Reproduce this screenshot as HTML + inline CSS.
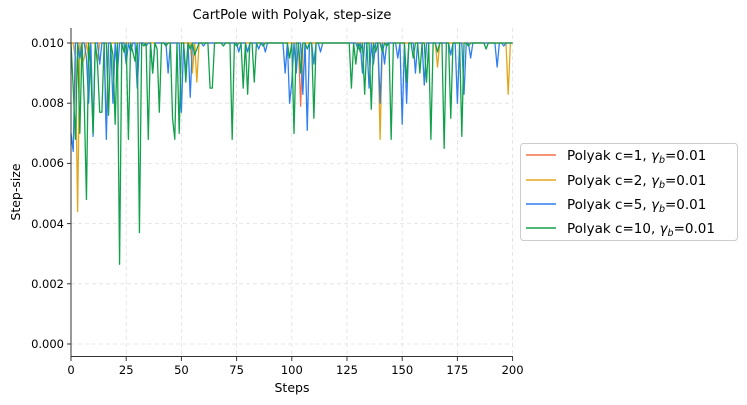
<!DOCTYPE html>
<html><head><meta charset="utf-8"><style>
body{margin:0;background:#fff;}
svg{display:block;font-family:"DejaVu Sans","Liberation Sans",sans-serif;}
</style></head><body>
<svg width="747" height="405" viewBox="0 0 747 405" xmlns="http://www.w3.org/2000/svg">
<rect width="747" height="405" fill="#fff"/>
<text x="292" y="19" font-size="13" text-anchor="middle" fill="#000">CartPole with Polyak, step-size</text>
<g stroke="#e0e0e0" stroke-width="0.8" stroke-dasharray="4,3">
<line x1="71" y1="28" x2="71" y2="356"/><line x1="126.2" y1="28" x2="126.2" y2="356"/><line x1="181.4" y1="28" x2="181.4" y2="356"/><line x1="236.6" y1="28" x2="236.6" y2="356"/><line x1="291.8" y1="28" x2="291.8" y2="356"/><line x1="347" y1="28" x2="347" y2="356"/><line x1="402.2" y1="28" x2="402.2" y2="356"/><line x1="457.4" y1="28" x2="457.4" y2="356"/><line x1="512.6" y1="28" x2="512.6" y2="356"/>
<line x1="71" y1="344" x2="513" y2="344"/><line x1="71" y1="283.8" x2="513" y2="283.8"/><line x1="71" y1="223.6" x2="513" y2="223.6"/><line x1="71" y1="163.4" x2="513" y2="163.4"/><line x1="71" y1="103.2" x2="513" y2="103.2"/><line x1="71" y1="43" x2="513" y2="43"/>
</g>
<g transform="translate(71,344) scale(2.208,-30.1)" fill="none" stroke-width="1.3" stroke-linejoin="round">
<polyline id="pr" vector-effect="non-scaling-stroke" stroke="#f4724f" points="0,10 103,10 104,7.9 105,10 200,10"/>
<polyline id="po" vector-effect="non-scaling-stroke" stroke="#e3a51a" points="0,10 200,10"/>
<polyline id="pb" vector-effect="non-scaling-stroke" stroke="#2f7ff0" points="0,10 200,10"/>
<polyline id="pg" vector-effect="non-scaling-stroke" stroke="#12a14b" points="0,10 200,10"/>
</g>
<g stroke="#333" stroke-width="1">
<line x1="71" y1="28" x2="71" y2="357"/><line x1="70.5" y1="356.5" x2="513" y2="356.5"/>
<line x1="67" y1="344" x2="71" y2="344"/><line x1="67" y1="283.8" x2="71" y2="283.8"/><line x1="67" y1="223.6" x2="71" y2="223.6"/><line x1="67" y1="163.4" x2="71" y2="163.4"/><line x1="67" y1="103.2" x2="71" y2="103.2"/><line x1="67" y1="43" x2="71" y2="43"/>
<line x1="71" y1="357" x2="71" y2="361"/><line x1="126.2" y1="357" x2="126.2" y2="361"/><line x1="181.4" y1="357" x2="181.4" y2="361"/><line x1="236.6" y1="357" x2="236.6" y2="361"/><line x1="291.8" y1="357" x2="291.8" y2="361"/><line x1="347" y1="357" x2="347" y2="361"/><line x1="402.2" y1="357" x2="402.2" y2="361"/><line x1="457.4" y1="357" x2="457.4" y2="361"/><line x1="512.6" y1="357" x2="512.6" y2="361"/>
</g>
<g font-size="11.5" fill="#000" text-anchor="end">
<text x="64" y="348">0.000</text><text x="64" y="288">0.002</text><text x="64" y="228">0.004</text><text x="64" y="167">0.006</text><text x="64" y="107">0.008</text><text x="64" y="47">0.010</text>
</g>
<g font-size="11.5" fill="#000" text-anchor="middle">
<text x="71" y="374">0</text><text x="126.2" y="374">25</text><text x="181.4" y="374">50</text><text x="236.6" y="374">75</text><text x="291.8" y="374">100</text><text x="347" y="374">125</text><text x="402.2" y="374">150</text><text x="457.4" y="374">175</text><text x="512.6" y="374">200</text>
</g>
<text x="292" y="392" font-size="12.5" text-anchor="middle">Steps</text>
<text transform="translate(20,192) rotate(-90)" font-size="12.5" text-anchor="middle">Step-size</text>
<rect x="520.5" y="143.5" width="217" height="97" rx="3" fill="#fff" stroke="#ccc"/>
<g stroke-width="1.5">
<line x1="526" y1="155" x2="556" y2="155" stroke="#f4724f"/>
<line x1="526" y1="180" x2="556" y2="180" stroke="#e3a51a"/>
<line x1="526" y1="204" x2="556" y2="204" stroke="#2f7ff0"/>
<line x1="526" y1="228" x2="556" y2="228" stroke="#12a14b"/>
</g>
<g font-size="13.5" fill="#000">
<text x="567" y="160">Polyak c=1, <tspan font-style="italic">γ</tspan><tspan font-size="9.5" font-style="italic" dy="3">b</tspan><tspan dy="-3">=0.01</tspan></text>
<text x="567" y="185">Polyak c=2, <tspan font-style="italic">γ</tspan><tspan font-size="9.5" font-style="italic" dy="3">b</tspan><tspan dy="-3">=0.01</tspan></text>
<text x="567" y="209">Polyak c=5, <tspan font-style="italic">γ</tspan><tspan font-size="9.5" font-style="italic" dy="3">b</tspan><tspan dy="-3">=0.01</tspan></text>
<text x="567" y="233">Polyak c=10, <tspan font-style="italic">γ</tspan><tspan font-size="9.5" font-style="italic" dy="3">b</tspan><tspan dy="-3">=0.01</tspan></text>
</g>
</svg>
<script>
function build(id,sp){
  var v=[];for(var i=0;i<=200;i++)v.push(10);
  for(var k in sp){v[+k]=sp[k];}
  var p=[];for(var i=0;i<=200;i++)p.push(i+","+v[i]);
  document.getElementById(id).setAttribute("points",p.join(" "));
}
build("po",{2:9.5,3:4.4,5:9.3,6:9.5,8:9.5,12:9.4,16:7.1,55:9.0,57:8.7,105:8.7,140:6.8,166:9.2,198:8.3});
build("pb",{0:7,1:6.4,4:9.5,7:9.5,8:8.0,10:6.9,13:9.3,16:6.8,19:8.0,21:9.0,25:9.3,27:9.7,30:8.5,34:9.9,37:9.0,44:9.0,50:7.7,52:9.0,54:8.2,60:9.9,76:9.7,80:9.7,85:9.8,88:9.7,97:9.0,99:8.0,100:8.7,102:9.0,105:8.3,107:7.1,110:9.3,113:9.7,130:9.8,132:9.0,135:8.5,137:9.3,140:8.0,142:9.3,148:9.5,150:7.3,152:8.0,156:9.0,160:8.6,172:9.6,175:8.0,178:8.3,181:9.5,193:9.2,196:9.9});
build("pg",{1:8.5,2:6.8,4:7.0,6:8.0,7:4.8,9:9.0,10:7.0,12:9.3,13:7.7,14:7.7,17:7.6,19:9.6,20:7.3,22:2.65,24:9.7,26:6.8,28:9.7,29:9.4,31:3.7,33:9.9,35:6.8,37:9.0,39:9.8,40:7.7,43:9.9,46:7.5,47:6.8,49:7.0,52:8.7,54:9.8,56:9.6,57:9.8,63:8.5,64:8.5,69:9.9,73:6.8,75:9.9,78:8.5,80:8.3,83:8.7,87:9.9,99:9.5,101:7.0,104:9.0,107:9.8,110:7.5,127:8.5,129:9.3,131:9.7,133:8.3,136:7.8,138:9.7,141:9.7,143:9.9,145:6.8,152:8.7,155:9.5,158:9.0,161:8.7,163:6.8,166:9.7,169:6.5,172:7.5,177:6.9,180:9.9,188:9.8});
</script>
</body></html>
